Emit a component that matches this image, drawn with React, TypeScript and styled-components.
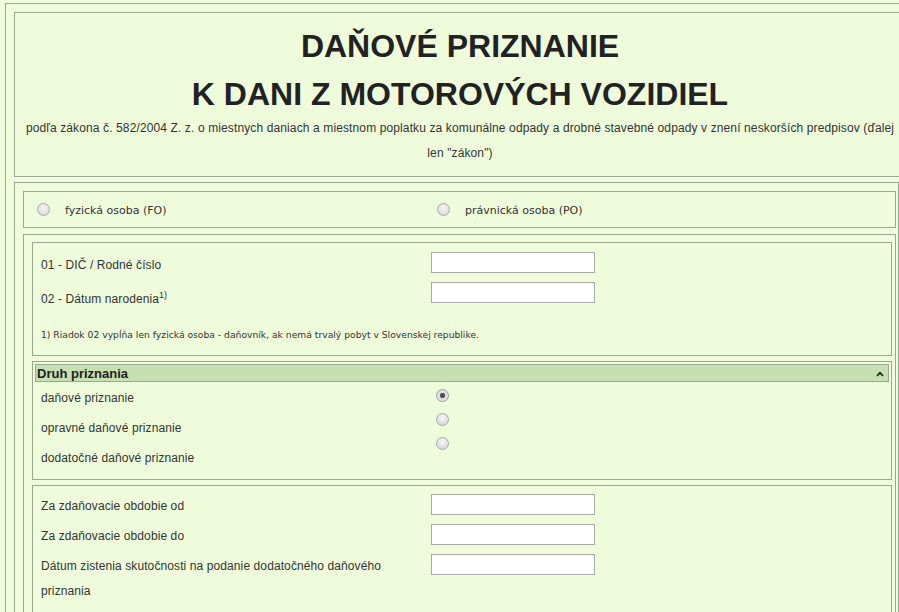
import React from "react";
import styled, { createGlobalStyle, css } from "styled-components";

const GlobalStyle = createGlobalStyle`
  html, body {
    margin: 0;
    padding: 0;
    overflow: hidden;
    background: #eefcdc;
  }
  body {
    font-family: "Liberation Sans", Arial, sans-serif;
    color: #333;
  }
`;

const line = "#9ba891";

const boxBase = css`
  border: 1px solid ${line};
  box-sizing: border-box;
`;

const Page = styled.div`
  padding: 3px 0 0 5px;
  width: 940px;
`;

const Frame = styled.div`
  ${boxBase};
  width: 910px;
  padding: 8px;
  display: flex;
  flex-direction: column;
`;

const TitleBox = styled.header`
  ${boxBase};
  padding: 9px 8px 10px;
  text-align: center;
`;

const Title = styled.h1`
  margin: 0;
  font: bold 32px/48px "Liberation Sans", Arial, sans-serif;
  color: #222;
`;

const Subtitle = styled.p`
  margin: -2px 0 0;
  font-size: 12px;
  line-height: 25px;
  letter-spacing: 0.12px;
  color: #333;
`;

const FormBox = styled.form`
  ${boxBase};
  width: 885px;
  margin: 5px 0 0;
  padding: 8px 2px 8px 8px;
`;

const ChoiceBox = styled.div`
  ${boxBase};
  padding: 8px;
  display: flex;
  height: 37px;
`;

const ChoiceOption = styled.label`
  width: 400px;
  display: flex;
  align-items: flex-start;
  height: 19px;
`;

const Radio = styled.input.attrs({ type: "radio" })`
  appearance: none;
  -webkit-appearance: none;
  width: 13px;
  height: 13px;
  margin: 3px 3px 0 5px;
  border-radius: 50%;
  box-sizing: border-box;
  border: 1px solid #a9aaa9;
  background: radial-gradient(circle at 50% 35%, #f6f6f6 0%, #e2e2e2 55%, #cfcfcf 100%);
  flex: none;
  &:checked {
    background: radial-gradient(circle at 50% 50%, #4d4d4d 0, #555 2.2px, #dedede 3px, #e8e8e8 100%);
    border-color: #9a9a9a;
  }
`;

const ChoiceText = styled.span`
  margin: 4px 0 0 12px;
  font: 11px/13px "DejaVu Sans", Tahoma, sans-serif;
  color: #333;
`;

const PersonBox = styled.div`
  ${boxBase};
  margin-top: 6px;
  padding: 7px 3px 8px 8px;
  display: flex;
  flex-direction: column;
`;

const SectionBox = styled.div<{ $top?: number; $mt?: number }>`
  ${boxBase};
  margin-top: ${(p) => p.$mt ?? 0}px;
  padding: ${(p) => p.$top ?? 8}px 8px 8px;
`;

const FieldGrid = styled.div`
  display: flex;
  align-items: flex-start;
`;

const LabelColumn = styled.div<{ $shift?: number }>`
  width: 390px;
  box-sizing: border-box;
  padding: ${(p) => p.$shift ?? 0}px 20px 0 0;
  flex: none;
`;

const FieldLabel = styled.div`
  font-size: 12px;
  line-height: 25px;
  letter-spacing: 0.1px;
  margin-bottom: 5px;
  color: #333;
  sup {
    font-size: 9px;
    letter-spacing: 0;
  }
`;

const ControlColumn = styled.div`
  display: flex;
  flex-direction: column;
  gap: 9px;
  padding-top: 1px;
`;

const TextInput = styled.input.attrs({ type: "text" })`
  width: 164px;
  height: 21px;
  box-sizing: border-box;
  margin: 0;
  border: 1px solid #a8aaa6;
  background: #fff;
`;

const Footnote = styled.p`
  margin: 11px 0 5px;
  font: 9.2px/14px "DejaVu Sans", Tahoma, sans-serif;
  color: #333;
`;

const CollapseBox = styled.div`
  ${boxBase};
  margin-top: 5px;
  padding: 2px;
`;

const CollapseHeader = styled.div`
  ${boxBase};
  height: 18px;
  background: #c6e0b2;
  display: flex;
  align-items: flex-start;
  justify-content: space-between;
  padding: 1px 4px 0 1px;
  font: bold 13px/16px "Liberation Sans", Arial, sans-serif;
  color: #1e1e1e;
  svg {
    align-self: center;
  }
`;

const CollapseBody = styled.div`
  display: flex;
  padding: 4px 6px 1px;
`;

const RadioColumn = styled.div`
  display: flex;
  flex-direction: column;
  gap: 11px;
  padding-top: 3px;
  ${Radio} {
    display: block;
    margin-top: 0;
  }
`;

const Chevron = () => (
  <svg width="8" height="6" viewBox="0 0 8 6" aria-hidden="true">
    <polyline points="1,4.8 4,1.8 7,4.8" fill="none" stroke="#1c2716" strokeWidth="1.7" />
  </svg>
);

export default function App() {
  return (
    <>
      <GlobalStyle />
      <Page>
        <Frame>
          <TitleBox>
            <Title>
              DAŇOVÉ PRIZNANIE
              <br />K DANI Z MOTOROVÝCH VOZIDIEL
            </Title>
            <Subtitle>
              podľa zákona č. 582/2004 Z. z. o miestnych daniach a miestnom poplatku za komunálne odpady a
              drobné stavebné odpady v znení neskorších predpisov (ďalej len "zákon")
            </Subtitle>
          </TitleBox>
          <FormBox onSubmit={(e) => e.preventDefault()}>
            <ChoiceBox>
              <ChoiceOption>
                <Radio name="osoba" />
                <ChoiceText>fyzická osoba (FO)</ChoiceText>
              </ChoiceOption>
              <ChoiceOption>
                <Radio name="osoba" />
                <ChoiceText>právnická osoba (PO)</ChoiceText>
              </ChoiceOption>
            </ChoiceBox>
            <PersonBox>
              <SectionBox $top={8}>
                <FieldGrid>
                  <LabelColumn $shift={2}>
                    <FieldLabel>01 - DIČ / Rodné číslo</FieldLabel>
                    <FieldLabel>
                      02 - Dátum narodenia<sup>1)</sup>
                    </FieldLabel>
                  </LabelColumn>
                  <ControlColumn>
                    <TextInput />
                    <TextInput />
                  </ControlColumn>
                </FieldGrid>
                <Footnote>
                  1) Riadok 02 vypĺňa len fyzická osoba - daňovník, ak nemá trvalý pobyt v Slovenskej republike.
                </Footnote>
              </SectionBox>
              <CollapseBox>
                <CollapseHeader>
                  <span>Druh priznania</span>
                  <Chevron />
                </CollapseHeader>
                <CollapseBody>
                  <LabelColumn>
                    <FieldLabel>daňové priznanie</FieldLabel>
                    <FieldLabel>opravné daňové priznanie</FieldLabel>
                    <FieldLabel>dodatočné daňové priznanie</FieldLabel>
                  </LabelColumn>
                  <RadioColumn>
                    <Radio name="druh" defaultChecked />
                    <Radio name="druh" />
                    <Radio name="druh" />
                  </RadioColumn>
                </CollapseBody>
              </CollapseBox>
              <SectionBox $top={7} $mt={5}>
                <FieldGrid>
                  <LabelColumn $shift={1}>
                    <FieldLabel>Za zdaňovacie obdobie od</FieldLabel>
                    <FieldLabel>Za zdaňovacie obdobie do</FieldLabel>
                    <FieldLabel>Dátum zistenia skutočnosti na podanie dodatočného daňového priznania</FieldLabel>
                  </LabelColumn>
                  <ControlColumn>
                    <TextInput />
                    <TextInput />
                    <TextInput />
                  </ControlColumn>
                </FieldGrid>
              </SectionBox>
            </PersonBox>
          </FormBox>
        </Frame>
      </Page>
    </>
  );
}
